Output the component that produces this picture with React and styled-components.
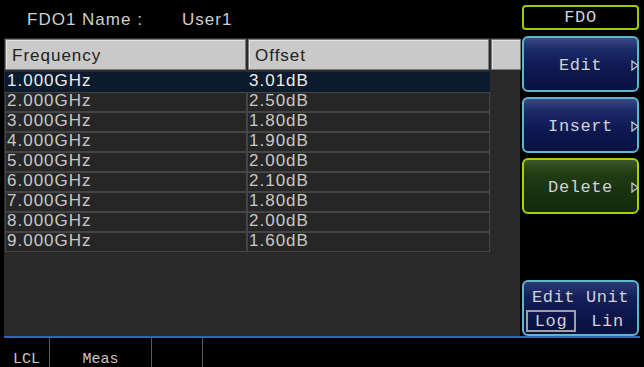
import React from "react";
import styled, { createGlobalStyle } from "styled-components";

const Global = createGlobalStyle`
  html, body { margin: 0; padding: 0; background: #000; }
  body { width: 644px; height: 367px; overflow: hidden; }
`;

const rows = [
  ["1.000GHz", "3.01dB"],
  ["2.000GHz", "2.50dB"],
  ["3.000GHz", "1.80dB"],
  ["4.000GHz", "1.90dB"],
  ["5.000GHz", "2.00dB"],
  ["6.000GHz", "2.10dB"],
  ["7.000GHz", "1.80dB"],
  ["8.000GHz", "2.00dB"],
  ["9.000GHz", "1.60dB"],
];

const Arrow = () => (
  <ArrowMark width="8" height="11" viewBox="0 0 8 11">
    <path d="M1 1 L7 5.5 L1 10 Z" fill="none" stroke="#c8c8c8" strokeWidth="1.3" />
  </ArrowMark>
);

const App = () => {
  return (
    <Screen>
      <Global />
      <Main>
        <LeftPane>
          <TitleBar>
            <TitleLabel>FDO1 Name :</TitleLabel>
            <TitleValue>User1</TitleValue>
          </TitleBar>
          <TablePanel>
            <HeaderRow>
              <HeadCell>Frequency</HeadCell>
              <HeadCell>Offset</HeadCell>
              <HeadCell />
            </HeaderRow>
            <Rows>
              {rows.map((r, i) => (
                <Row key={r[0]} $selected={i === 0}>
                  <Cell $selected={i === 0}>{r[0]}</Cell>
                  <Cell $selected={i === 0}>{r[1]}</Cell>
                </Row>
              ))}
            </Rows>
          </TablePanel>
        </LeftPane>
        <SoftKeys>
          <ModeLabel>FDO</ModeLabel>
          <SoftKey>Edit<Arrow /></SoftKey>
          <SoftKey>Insert<Arrow /></SoftKey>
          <SoftKey $green>Delete<Arrow /></SoftKey>
          <Spacer />
          <UnitKey>
            <UnitTitle>Edit Unit</UnitTitle>
            <UnitOptions>
              <UnitOption $active>Log</UnitOption>
              <UnitOption>Lin</UnitOption>
            </UnitOptions>
          </UnitKey>
        </SoftKeys>
      </Main>
      <StatusBar>
        <StatusCell $w={45}>LCL</StatusCell>
        <StatusCell $w={101}>Meas</StatusCell>
        <StatusCell $w={50} />
        <StatusCell $last />
      </StatusBar>
    </Screen>
  );
};

const Screen = styled.div`
  width: 644px;
  height: 367px;
  background: #000;
  display: flex;
  flex-direction: column;
  overflow: hidden;
`;

const Main = styled.div`
  display: flex;
  height: 336px;
`;

const LeftPane = styled.div`
  width: 516px;
  margin-left: 4px;
  display: flex;
  flex-direction: column;
`;

const TitleBar = styled.div`
  height: 38px;
  display: flex;
  align-items: center;
  padding: 2px 0 0 23px;
  box-sizing: border-box;
  font-family: "Liberation Sans", Arial, sans-serif;
  font-size: 17px;
  letter-spacing: 1px;
  color: #cfcfcf;
`;

const TitleLabel = styled.span`
  width: 155px;
`;

const TitleValue = styled.span``;

const TablePanel = styled.div`
  flex: 1;
  background: #2a2a2a;
  padding: 1px 0 0 1px;
  font-family: "Liberation Sans", Arial, sans-serif;
  font-size: 17px;
  letter-spacing: 1px;
`;

const HeaderRow = styled.div`
  display: grid;
  grid-template-columns: 241px 241px 30px;
  column-gap: 2px;
  height: 31px;
`;

const HeadCell = styled.div`
  background: #c9c9c9;
  border: 1px solid #7a7a7a;
  box-shadow: inset 1px 1px 0 #e2e2e2;
  color: #222;
  display: flex;
  align-items: center;
  padding: 2px 0 0 6px;
  box-sizing: border-box;
`;

const Rows = styled.div`
  margin-top: 2px;
  width: 485px;
  display: flex;
  flex-direction: column;
`;

const Row = styled.div`
  display: grid;
  grid-template-columns: 242px 243px;
  height: 20px;
  background: ${(p) => (p.$selected ? "#0b1a2c" : "transparent")};
`;

const Cell = styled.div`
  border: 1px solid ${(p) => (p.$selected ? "#0b1a2c" : "#454545")};
  background: ${(p) => (p.$selected ? "#0b1a2c" : "#262626")};
  color: ${(p) => (p.$selected ? "#ececec" : "#c8c8c8")};
  line-height: 20px;
  padding-left: 1px;
  box-sizing: border-box;
  display: flex;
  align-items: flex-end;
  overflow: hidden;
`;

const SoftKeys = styled.div`
  width: 117px;
  margin-left: 2px;
  padding-top: 5px;
  display: flex;
  flex-direction: column;
  gap: 5px;
  font-family: "Liberation Mono", "Courier New", monospace;
  font-size: 17px;
  letter-spacing: 0.6px;
  color: #d2d2d2;
`;

const ModeLabel = styled.div`
  height: 25px;
  border: 2px solid #9fcb00;
  border-radius: 4px;
  box-sizing: border-box;
  display: flex;
  align-items: center;
  justify-content: center;
  background: #000;
  margin-bottom: 1px;
`;

const SoftKey = styled.div`
  position: relative;
  height: 56px;
  box-sizing: border-box;
  border: 2px solid ${(p) => (p.$green ? "#a6d200" : "#5cb6cf")};
  border-radius: 6px;
  background: ${(p) =>
    p.$green
      ? "linear-gradient(#3b5a2a 0%, #213d14 25%, #183210 60%, #122a0a 100%)"
      : "linear-gradient(#3a4c84 0%, #1c2a68 22%, #0e1850 60%, #0a1040 100%)"};
  display: flex;
  align-items: center;
  justify-content: center;
  padding-top: 2px;
`;

const ArrowMark = styled.svg`
  position: absolute;
  right: -2px;
  top: 50%;
  margin-top: -4px;
`;

const Spacer = styled.div`
  flex: 1;
`;

const UnitKey = styled.div`
  height: 56px;
  box-sizing: border-box;
  border: 2px solid #5cb6cf;
  border-radius: 6px;
  background: linear-gradient(#2c3a74 0%, #141f5a 30%, #0c1448 70%, #0a1040 100%);
  display: flex;
  flex-direction: column;
  padding: 3px 2px 0 2px;
`;

const UnitTitle = styled.div`
  text-align: center;
  height: 25px;
  line-height: 25px;
`;

const UnitOptions = styled.div`
  display: grid;
  grid-template-columns: 50px 1fr;
  align-items: center;
`;

const UnitOption = styled.div`
  height: 22px;
  box-sizing: border-box;
  border: 2px solid ${(p) => (p.$active ? "#a0a0a0" : "transparent")};
  display: flex;
  align-items: center;
  justify-content: center;
  padding-left: ${(p) => (p.$active ? "0" : "4px")};
`;

const StatusBar = styled.div`
  flex: 1;
  display: flex;
  border-top: 2px solid #2f63c8;
  margin: 0 4px;
  font-family: "Liberation Mono", "Courier New", monospace;
  font-size: 15px;
  line-height: 14px;
  color: #c8c8c8;
`;

const StatusCell = styled.div`
  ${(p) => (p.$last ? "flex: 1;" : `width: ${p.$w}px;`)}
  border-right: ${(p) => (p.$last ? "none" : "1px solid #5a5a5a")};
  display: flex;
  align-items: flex-end;
  justify-content: center;
  padding-bottom: 0;
`;

export default App;
